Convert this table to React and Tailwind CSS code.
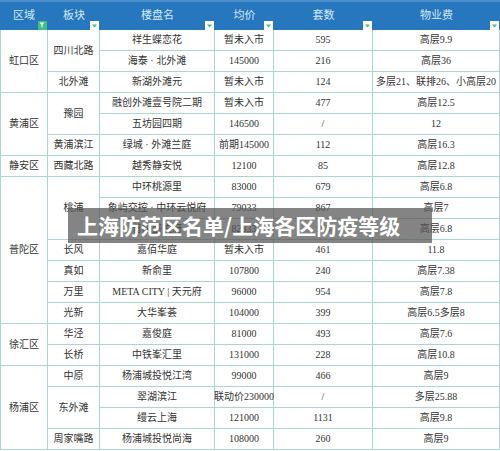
import React from "react";

const rows = [
  { region: "虹口区", rSpan: 3, block: "四川北路", bSpan: 2, name: "祥生蝶恋花", price: "暂未入市", count: "595", fee: "高层9.9" },
  { name: "海泰 · 北外滩", price: "145000", count: "216", fee: "高层36" },
  { block: "北外滩", bSpan: 1, name: "新湖外滩元", price: "暂未入市", count: "124", fee: "多层21、联排26、小高层20" },
  { region: "黄浦区", rSpan: 3, block: "豫园", bSpan: 2, name: "融创外滩壹号院二期", price: "暂未入市", count: "477", fee: "高层12.5" },
  { name: "五坊园四期", price: "146500", count: "/", fee: "12" },
  { block: "黄浦滨江", bSpan: 1, name: "绿城 · 外滩兰庭", price: "前期145000", count: "112", fee: "高层16.3" },
  { region: "静安区", rSpan: 1, block: "西藏北路", bSpan: 1, name: "越秀静安悦", price: "12100", count: "85", fee: "高层12.8" },
  { region: "普陀区", rSpan: 7, block: "桃浦", bSpan: 3, name: "中环桃源里", price: "83000", count: "679", fee: "高层6.8" },
  { name: "象屿交控 · 中环云悦府", price: "79033", count: "867", fee: "高层7" },
  { name: "普陀盛悦府", price: "82333", count: "155", fee: "高层6.8" },
  { block: "长风", bSpan: 1, name: "嘉佰华庭", price: "暂未入市", count: "461", fee: "11.8" },
  { block: "真如", bSpan: 1, name: "新俞里", price: "107800", count: "240", fee: "高层7.38" },
  { block: "万里", bSpan: 1, name: "META CITY | 天元府", price: "96000", count: "954", fee: "高层7.8" },
  { block: "光新", bSpan: 1, name: "大华峯荟", price: "104000", count: "399", fee: "高层6.5多层8" },
  { region: "徐汇区", rSpan: 2, block: "华泾", bSpan: 1, name: "嘉俊庭", price: "81000", count: "493", fee: "高层7.6" },
  { block: "长桥", bSpan: 1, name: "中铁峯汇里", price: "131000", count: "228", fee: "高层10.8" },
  { region: "杨浦区", rSpan: 4, block: "中原", bSpan: 1, name: "杨浦城投悦江湾", price: "99000", count: "466", fee: "高层9" },
  { block: "东外滩", bSpan: 2, name: "翠湖滨江", price: "联动价230000", count: "/", fee: "多层25.88" },
  { name: "缦云上海", price: "121000", count: "1131", fee: "高层9.8" },
  { block: "周家嘴路", bSpan: 1, name: "杨浦城投悦尚海", price: "108000", count: "260", fee: "高层9" },
];

const spanClass = {
  1: "row-span-1",
  2: "row-span-2",
  3: "row-span-3",
  4: "row-span-4",
  7: "row-span-7",
};

const cell =
  "flex items-center justify-center whitespace-nowrap border-r border-b border-[#a9d5d3] text-[10px] leading-none text-[#333]";

const FilterBox = ({ active }) =>
  active ? (
    <span className="absolute right-[1px] bottom-0 flex h-[9px] w-[9px] items-center justify-center bg-[#3fbf86]">
      <svg width="7" height="7" viewBox="0 0 7 7">
        <path d="M0.5 0.5h5l-2 2.2v3l-1-0.6v-2.4z" fill="#fff" />
      </svg>
    </span>
  ) : (
    <span className="absolute right-[1px] bottom-0 flex h-[9px] w-[9px] items-center justify-center bg-white">
      <svg width="5" height="4" viewBox="0 0 5 4">
        <path d="M0 0.5h5l-2.5 3z" fill="#3fbf86" />
      </svg>
    </span>
  );

const headers = ["区域", "板块", "楼盘名", "均价", "套数", "物业费"];

export default function App() {
  return (
    <div
      className="relative h-[451px] w-[500px] overflow-hidden bg-white"
      style={{ fontFamily: '"Liberation Serif", "Noto Sans CJK SC", serif' }}
    >
      <div className="grid grid-cols-[48px_52px_115px_59px_99px_127px] grid-rows-[30px_repeat(20,21px)]">
        {headers.map((h, i) => (
          <div
            key={h}
            className="relative flex items-center justify-center border-t-2 border-[#4a8fcc] bg-[#2677bd] pb-[2px] text-[11px] text-[#d4e9f7]"
          >
            {h}
            <FilterBox active={i === 0} />
          </div>
        ))}
        {rows.map((r, i) => (
          <React.Fragment key={i}>
            {r.region && <div className={`${cell} ${spanClass[r.rSpan]} border-l`}>{r.region}</div>}
            {r.block && <div className={`${cell} ${spanClass[r.bSpan]}`}>{r.block}</div>}
            <div className={cell}>{r.name}</div>
            <div className={cell}>{r.price}</div>
            <div className={cell}>{r.count}</div>
            <div className={cell}>{r.fee}</div>
          </React.Fragment>
        ))}
      </div>

      <div className="absolute left-[68px] top-[208px] flex h-[35px] w-[364px] items-center bg-[rgba(85,85,85,0.72)] pl-[9px]">
        <span
          className="text-[21px] font-bold leading-none text-white"
          style={{ fontFamily: '"Noto Sans CJK SC", sans-serif' }}
        >
          上海防范区名单/上海各区防疫等级
        </span>
      </div>
    </div>
  );
}
